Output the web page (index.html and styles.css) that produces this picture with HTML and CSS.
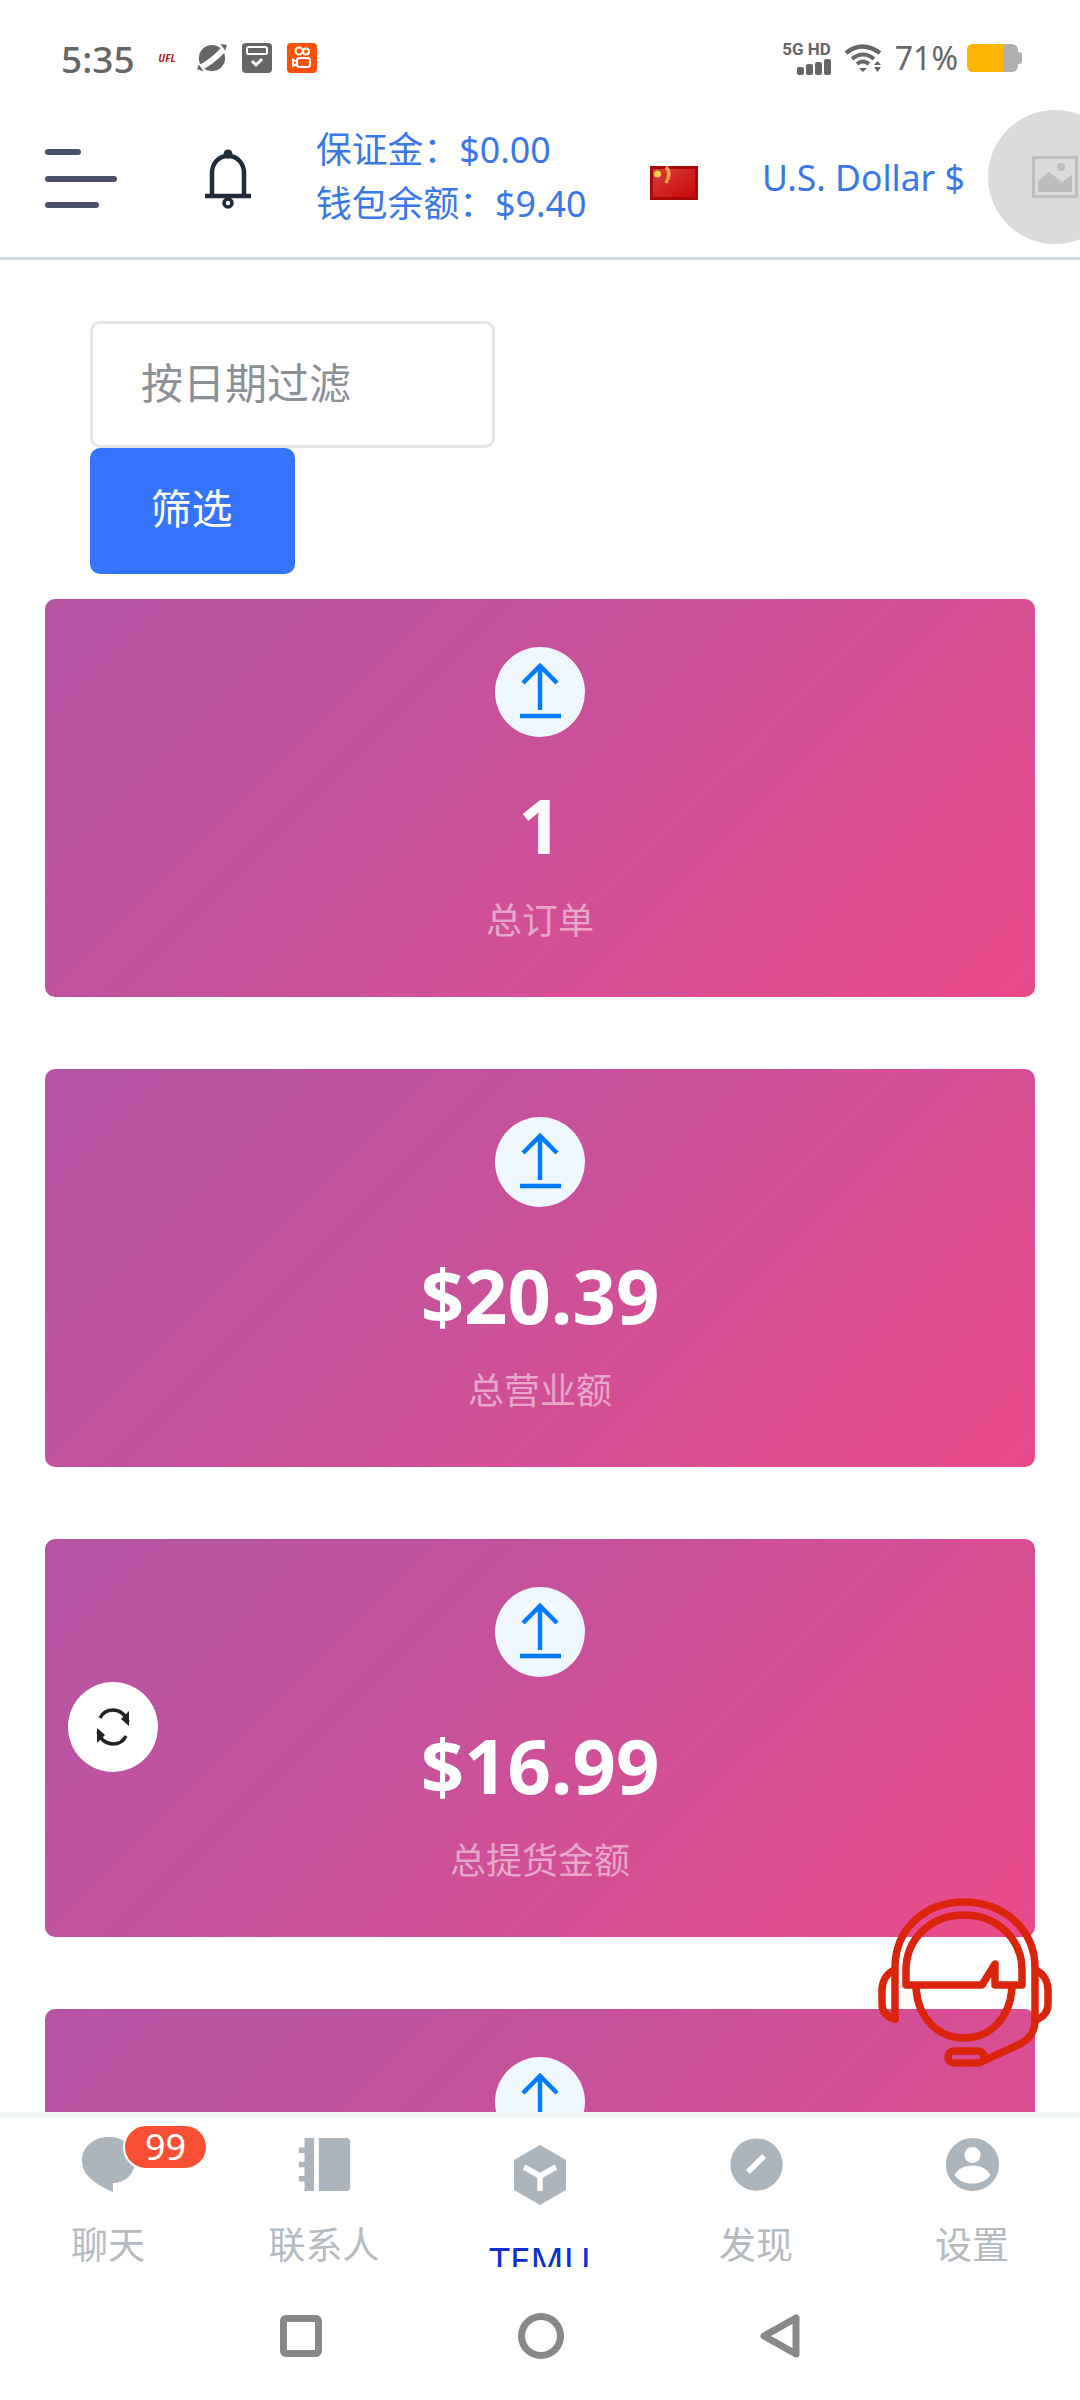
FILE: index.html
```html
<!DOCTYPE html>
<html lang="zh">
<head>
    <meta charset="UTF-8">
    <meta name="viewport" content="width=device-width, initial-scale=1.0">
    <title>TEMU</title>
    <link rel="stylesheet" href="styles.css">
</head>
<body>
<div class="page">

    <!-- Status bar -->
    <div class="status-bar">
        <span class="time">5:35</span>
        <span class="app-ufl">UFL</span>
        <svg class="app-icon planet" viewBox="0 0 32 30">
            <circle cx="16" cy="15" r="14" fill="#666"/>
            <path d="M1 26 C10 23 22 13 31 3" stroke="#fff" stroke-width="6" fill="none"/>
            <path d="M0 27 L7 29 L2 22Z M32 1 L25 0 L30 7Z" fill="#666"/>
        </svg>
        <svg class="app-icon" viewBox="0 0 30 30">
            <rect width="30" height="30" rx="4" fill="#666"/>
            <path d="M5 11 V6 Q5 4 7 4 H23 Q25 4 25 6 V11" fill="none" stroke="#fff" stroke-width="2"/>
            <rect x="7" y="9" width="16" height="16" fill="#666"/>
            <path d="M5 11 H25" stroke="#fff" stroke-width="2"/>
            <path d="M10 18 L14 22 L20 16" fill="none" stroke="#fff" stroke-width="3"/>
        </svg>
        <svg class="app-icon" viewBox="0 0 30 30">
            <rect width="30" height="30" rx="4" fill="#fb5107"/>
            <circle cx="12" cy="8" r="3.500" fill="none" stroke="#fff" stroke-width="2"/>
            <circle cx="19" cy="8.500" r="3" fill="none" stroke="#fff" stroke-width="2"/>
            <rect x="10" y="15" width="13" height="9" rx="2.500" fill="none" stroke="#fff" stroke-width="2"/>
            <path d="M10 19 L6 16.500 V23 L10 21" fill="none" stroke="#fff" stroke-width="2"/>
        </svg>

        <div class="status-right">
            <div class="signal">
                <span class="net-type">5G HD</span>
                <div class="bars">
                    <i class="bar1"></i><i class="bar2"></i><i class="bar3"></i><i class="bar4"></i>
                </div>
            </div>
            <svg class="wifi" viewBox="0 0 38 30">
                <path d="M1 10 Q17 -3 35 10" fill="none" stroke="#666" stroke-width="4.500"/>
                <path d="M7 16 Q18 7 29 16" fill="none" stroke="#666" stroke-width="4"/>
                <path d="M12 21 Q18 16 24 21" fill="none" stroke="#666" stroke-width="4"/>
                <path d="M14 25 H22 L18 29Z" fill="#666"/>
                <path d="M29 22 L32.500 18 L36 22Z M29 24 H36 L32.500 29Z" fill="#666"/>
            </svg>
            <span class="battery-pct">71%</span>
            <div class="battery"><div class="battery-fill"></div></div>
            <div class="battery-tip"></div>
        </div>
    </div>

    <!-- Header -->
    <div class="header">
        <div class="menu-btn">
            <span class="line-short"></span>
            <span class="line-long"></span>
            <span class="line-mid"></span>
        </div>
        <svg class="bell" viewBox="0 0 46 60">
            <path d="M7 47 V24 C7 14 14 7 23 7 C32 7 39 14 39 24 V47" fill="none" stroke="#222b3a" stroke-width="4.500"/>
            <circle cx="23" cy="5" r="4.500" fill="#222b3a"/>
            <path d="M0 47 H46" stroke="#222b3a" stroke-width="4.500"/>
            <circle cx="23" cy="54" r="4" fill="none" stroke="#222b3a" stroke-width="3.500"/>
        </svg>
        <div class="balance">
            <p>保证金：$0.00</p>
            <p>钱包余额：$9.40</p>
        </div>
        <svg class="flag" viewBox="0 0 48 34">
            <defs>
                <linearGradient id="flagRed" x1="0" y1="0" x2="1" y2="1">
                    <stop offset="0" stop-color="#d8403c"/>
                    <stop offset="1" stop-color="#c80808"/>
                </linearGradient>
            </defs>
            <rect width="48" height="34" fill="#a80808"/>
            <rect x="3" y="3" width="42" height="28" fill="url(#flagRed)"/>
            <circle cx="7.500" cy="8" r="3.500" fill="#f6cf4a"/>
            <path d="M16 1 C20 5 20 10 16 17" fill="none" stroke="#e8a83a" stroke-width="3.500"/>
        </svg>
        <span class="currency">U.S. Dollar $</span>
        <div class="avatar">
            <svg class="avatar-img" viewBox="0 0 46 42">
                <rect x="1.500" y="1.500" width="43" height="39" fill="none" stroke="#bdbdbd" stroke-width="3"/>
                <circle cx="29" cy="11" r="4" fill="#bdbdbd"/>
                <path d="M6 36 V25 L17 16 L30 26 L40 19 V36Z" fill="#bdbdbd"/>
            </svg>
        </div>
    </div>

    <!-- Content -->
    <div class="content">
        <div class="filter">
            <input class="date-input" type="text" placeholder="按日期过滤">
            <button class="filter-btn">筛选</button>
        </div>

        <div class="card">
            <div class="card-icon">
                <svg viewBox="0 0 90 90"><path d="M45 19 V63 M28 36 L45 19 L62 36 M25 69 H66" fill="none" stroke="#007bff" stroke-width="4.500"/></svg>
            </div>
            <div class="card-value">1</div>
            <div class="card-label">总订单</div>
        </div>
        <div class="card">
            <div class="card-icon">
                <svg viewBox="0 0 90 90"><path d="M45 19 V63 M28 36 L45 19 L62 36 M25 69 H66" fill="none" stroke="#007bff" stroke-width="4.500"/></svg>
            </div>
            <div class="card-value">$20.39</div>
            <div class="card-label">总营业额</div>
        </div>
        <div class="card">
            <div class="card-icon">
                <svg viewBox="0 0 90 90"><path d="M45 19 V63 M28 36 L45 19 L62 36 M25 69 H66" fill="none" stroke="#007bff" stroke-width="4.500"/></svg>
            </div>
            <div class="card-value">$16.99</div>
            <div class="card-label">总提货金额</div>
        </div>
        <div class="card">
            <div class="card-icon">
                <svg viewBox="0 0 90 90"><path d="M45 19 V63 M28 36 L45 19 L62 36 M25 69 H66" fill="none" stroke="#007bff" stroke-width="4.500"/></svg>
            </div>
        </div>
    </div>

    <!-- Tabs -->
    <div class="tabbar">
        <div class="tab">
            <svg class="tab-icon" viewBox="2 2 55 57">
                <path d="M30 3 C14 3 3 13 3 27 C3 42 18 51 34 58 V49 C46 49 56 40 56 27 C56 13 45 3 30 3Z" fill="#adb5bc"/>
            </svg>
            <span class="tab-label">聊天</span>
            <span class="badge">99</span>
        </div>
        <div class="tab">
            <svg class="tab-icon" viewBox="0 0 60 60">
                <path d="M9 2 H19 V58 H9 V48 H3 V42 H9 V33 H3 V27 H9 V18 H3 V12 H9Z" fill="#adb5bc"/>
                <path d="M24 2 H53 Q57 2 57 6 V54 Q57 58 53 58 H24Z" fill="#adb5bc"/>
            </svg>
            <span class="tab-label">联系人</span>
        </div>
        <div class="tab tab-active">
            <svg class="tab-icon" viewBox="0 0 60 60">
                <path d="M30 0 L56 15 V45 L30 60 L4 45 V15Z" fill="#adb5bc"/>
                <path d="M14 22 L30 31 L46 22 M30 31 V46" fill="none" stroke="#fff" stroke-width="5.500"/>
            </svg>
            <span class="tab-label">TEMU</span>
        </div>
        <div class="tab">
            <svg class="tab-icon" viewBox="0 0 60 60">
                <circle cx="30" cy="30" r="27.500" fill="#adb5bc"/>
                <path d="M21 38 L38 21" stroke="#fff" stroke-width="6"/>
            </svg>
            <span class="tab-label">发现</span>
        </div>
        <div class="tab">
            <svg class="tab-icon" viewBox="0 0 60 60">
                <circle cx="30" cy="30" r="28" fill="#adb5bc"/>
                <circle cx="30" cy="20" r="8.500" fill="#fff"/>
                <path d="M11 41 C15 34 22 31 30 31 C38 31 45 34 49 41 C45 47 38 50 30 50 C22 50 15 47 11 41Z" fill="#fff"/>
            </svg>
            <span class="tab-label">设置</span>
        </div>
    </div>

    <!-- System navigation -->
    <div class="navbar">
        <div class="nav-square"></div>
        <div class="nav-circle"></div>
        <svg class="nav-back" viewBox="0 0 40 44">
            <path d="M4 22 L36 4 V40Z" fill="none" stroke="#888" stroke-width="7" stroke-linejoin="round"/>
        </svg>
    </div>

    <!-- Floating buttons -->
    <div class="refresh-btn">
        <svg viewBox="0 0 40 40">
            <path d="M7 11 C10 5 15 3 20 3 C27 3 33 8 35 15" fill="none" stroke="#222" stroke-width="3.500"/>
            <path d="M36 4 V19 L28 12Z" fill="#222"/>
            <path d="M33 29 C30 35 25 37 20 37 C13 37 7 32 5 25" fill="none" stroke="#222" stroke-width="3.500"/>
            <path d="M4 36 V21 L12 28Z" fill="#222"/>
        </svg>
    </div>
    <svg class="support" viewBox="0 0 174 170">
        <g fill="none" stroke="#da240c" stroke-width="7.500" stroke-linejoin="round" stroke-linecap="round">
            <path d="M17 121 V70 C17 30 48 4 86 4 C124 4 157 30 157 70 V122 C157 136 150 142 142 146 L105 163"/>
            <path d="M28 87 V72 C28 40 54 17 86 17 C118 17 144 40 144 72 V87 H117 V66 L104 87Z"/>
            <path d="M38 90 C40 120 60 140 86 140 C112 140 132 120 134 90"/>
            <path d="M16 72 C8 76 4 84 4 92 V106 C4 114 10 120 17 121"/>
            <path d="M158 72 C166 76 170 84 170 92 V106 C170 114 165 120 157 122"/>
            <rect x="70" y="153" width="36" height="12" rx="6"/>
        </g>
    </svg>

</div>
</body>
</html>
```

FILE: styles.css
```css
* {
    box-sizing: border-box;
}
body {
    margin: 0;
    font-family: "Noto Sans", "Noto Sans CJK SC", sans-serif;
    background: #fff;
}
.page {
    position: relative;
    width: 1080px;
    height: 2400px;
    overflow: hidden;
    display: flex;
    flex-direction: column;
}

/* status bar */
.status-bar {
    height: 100px;
    flex-shrink: 0;
    display: flex;
    align-items: center;
    padding: 16px 0 0 61px;
    color: #666;
}
.time {
    font-size: 37px;
    font-weight: 500;
    width: 92px;
    line-height: 1;
}
.app-ufl {
    width: 28px;
    font-size: 10px;
    font-weight: 700;
    font-style: italic;
    color: #b01a22;
    text-align: center;
    margin-right: 16px;
}
.app-icon {
    width: 30px;
    height: 30px;
    margin-right: 15px;
}
.status-right {
    margin-left: auto;
    display: flex;
    align-items: center;
    padding-right: 58px;
}
.signal {
    width: 49px;
    display: flex;
    flex-direction: column;
    align-items: flex-end;
    margin-right: 14px;
}
.net-type {
    font-family: "Roboto", sans-serif;
    font-size: 17px;
    font-weight: 700;
    line-height: 16px;
    white-space: nowrap;
}
.bars {
    display: flex;
    align-items: flex-end;
    gap: 2px;
    height: 18px;
}
.bars i {
    width: 7px;
    background: #666;
    border-radius: 2px;
}
.bars .bar1 { height: 8px; }
.bars .bar2 { height: 11px; }
.bars .bar3 { height: 13px; }
.bars .bar4 { height: 16px; }
.wifi {
    width: 38px;
    height: 30px;
    margin-right: 12px;
}
.battery-pct {
    font-size: 32px;
    line-height: 1;
    margin-right: 9px;
}
.battery {
    width: 51px;
    height: 28px;
    background: #b0b0b0;
    border-radius: 6px;
    overflow: hidden;
}
.battery-fill {
    width: 36px;
    height: 100%;
    background: #ffb600;
}
.battery-tip {
    width: 4px;
    height: 12px;
    background: #b0b0b0;
    border-radius: 0 3px 3px 0;
}

/* header */
.header {
    height: 160px;
    flex-shrink: 0;
    display: flex;
    align-items: center;
    border-bottom: 3px solid #d3dde6;
    padding-left: 45px;
    overflow: hidden;
}
.menu-btn {
    width: 72px;
    height: 59px;
    display: flex;
    flex-direction: column;
    justify-content: space-between;
    margin-right: 88px;
}
.menu-btn span {
    height: 6px;
    background: #4a5068;
    border-radius: 3px;
}
.line-short { width: 36px; }
.line-long { width: 72px; }
.line-mid { width: 54px; }
.bell {
    width: 46px;
    height: 60px;
    flex-shrink: 0;
    margin-right: 65px;
}
.balance {
    width: 334px;
    flex-shrink: 0;
    margin-top: -5px;
    color: #3b78e7;
    font-size: 35.800px;
    line-height: 54px;
    white-space: nowrap;
}
.balance p {
    margin: 0;
}
.flag {
    width: 48px;
    height: 34px;
    flex-shrink: 0;
    margin-top: 8px;
    margin-right: 64px;
}
.currency {
    width: 226px;
    flex-shrink: 0;
    margin-top: -3px;
    color: #3b78e7;
    font-size: 35.500px;
    white-space: nowrap;
}
.avatar {
    width: 134px;
    height: 134px;
    flex-shrink: 0;
    margin-top: -3px;
    border-radius: 50%;
    background: #dbdbdb;
    display: flex;
    align-items: center;
    justify-content: center;
}
.avatar-img {
    width: 46px;
    height: 42px;
}

/* content */
.content {
    flex: 1;
    min-height: 0;
    overflow: hidden;
    padding: 61px 45px 0;
}
.filter {
    padding-left: 45px;
    margin-bottom: 25px;
}
.date-input {
    display: block;
    width: 405px;
    height: 127px;
    border: 3px solid #e2e5ea;
    border-radius: 10px;
    padding: 0 48px 4px;
    font-family: inherit;
    font-size: 42px;
    background: #fff;
    outline: none;
}
.date-input::placeholder {
    color: #8b8f96;
}
.filter-btn {
    display: block;
    width: 205px;
    height: 126px;
    border: 0;
    border-radius: 10px;
    background: #3574ff;
    color: #fff;
    font-family: inherit;
    font-size: 41px;
    padding: 0 2px 10px 0;
}
.card {
    height: 398px;
    margin-bottom: 72px;
    border-radius: 10px;
    background: linear-gradient(135deg, #b654a3 0%, #b954a2 15%, #c9519b 45%, #ea4a8a 100%);
    display: flex;
    flex-direction: column;
    align-items: center;
    padding-top: 48px;
}
.card-icon {
    width: 90px;
    height: 90px;
    flex-shrink: 0;
    border-radius: 50%;
    background: #f0f8ff;
}
.card-icon svg {
    display: block;
    width: 90px;
    height: 90px;
}
.card-value {
    margin-top: 36px;
    color: #fff;
    font-size: 76px;
    font-weight: 700;
    line-height: 104px;
}
.card-label {
    margin-top: 19px;
    color: rgba(255, 255, 255, 0.5);
    font-size: 36px;
    line-height: 50px;
}

/* tabs */
.tabbar {
    height: 155px;
    flex-shrink: 0;
    display: flex;
    border-top: 6px solid #f4f7f7;
    background: #fff;
    overflow: hidden;
}
.tab {
    position: relative;
    width: 216px;
    display: flex;
    flex-direction: column;
    align-items: center;
    padding-top: 18px;
}
.tab-icon {
    width: 57px;
    height: 57px;
    flex-shrink: 0;
    display: block;
}
.tab-label {
    flex-shrink: 0;
    margin-top: 30px;
    color: #b4bbc1;
    font-size: 37px;
    line-height: 44px;
    white-space: nowrap;
}
.tab-active {
    padding-top: 27px;
}
.tab-active .tab-icon {
    width: 60px;
    height: 60px;
}
.tab-active .tab-label {
    margin-top: 33px;
    color: #0a2fd0;
    font-size: 37px;
}
.badge {
    position: absolute;
    top: 6px;
    left: 123px;
    width: 85px;
    height: 46px;
    border: 2px solid #fff;
    border-radius: 23px;
    background: #f95035;
    color: #fff;
    font-size: 36px;
    line-height: 42px;
    text-align: center;
}

/* system nav */
.navbar {
    height: 133px;
    flex-shrink: 0;
    display: flex;
    align-items: center;
    justify-content: center;
    gap: 196px;
    padding-top: 5px;
    background: #fff;
}
.nav-square {
    width: 42px;
    height: 42px;
    border: 7px solid #888;
    border-radius: 6px;
}
.nav-circle {
    width: 46px;
    height: 46px;
    border: 7px solid #888;
    border-radius: 50%;
}
.nav-back {
    width: 40px;
    height: 44px;
}

/* floating */
.refresh-btn {
    position: absolute;
    left: 68px;
    top: 1682px;
    width: 90px;
    height: 90px;
    border-radius: 50%;
    background: #fff;
    display: flex;
    align-items: center;
    justify-content: center;
}
.refresh-btn svg {
    width: 40px;
    height: 40px;
}
.support {
    position: absolute;
    left: 878px;
    top: 1898px;
    width: 174px;
    height: 170px;
}
```
